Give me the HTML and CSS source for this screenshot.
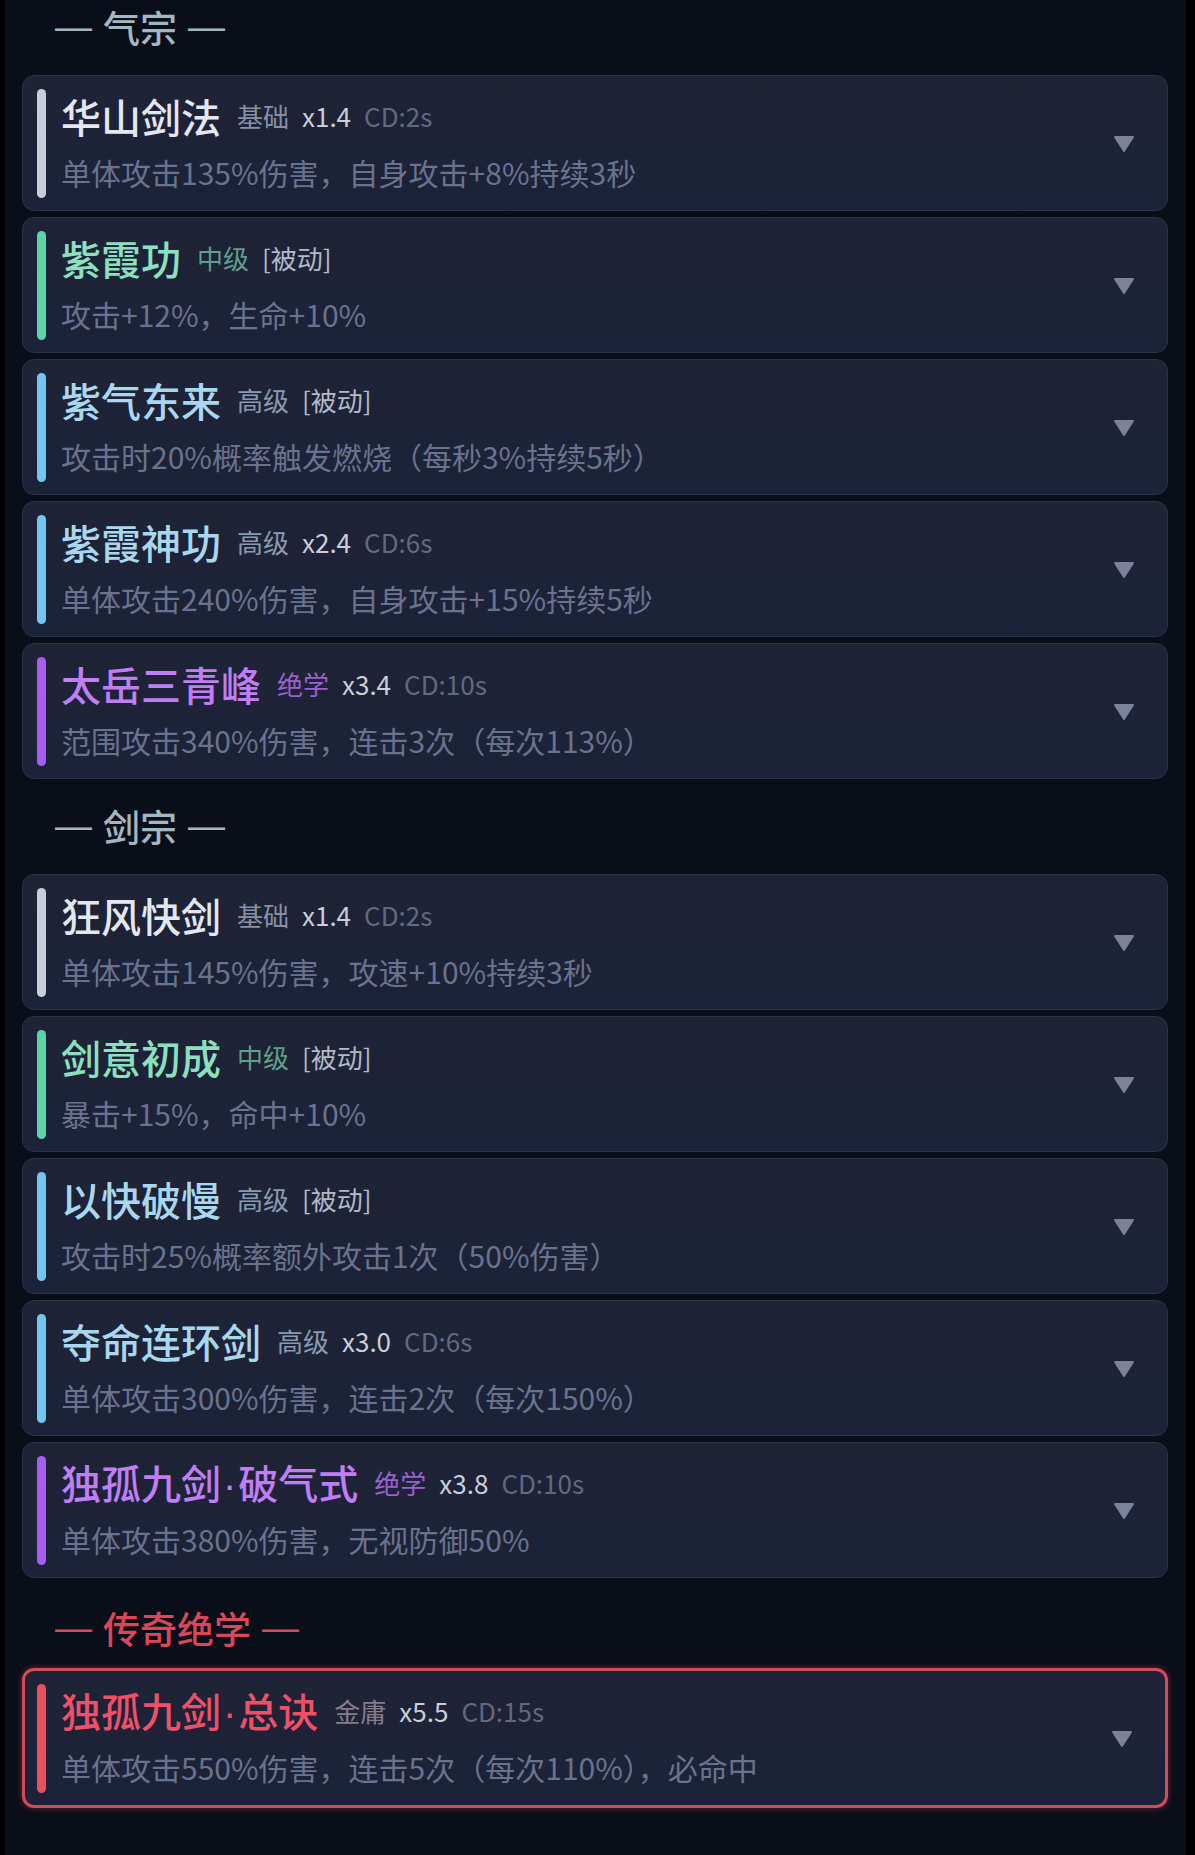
FILE: index.html
```html
<html>
    <head>
    <title>华山武学</title>
    <link rel="stylesheet" href="styles.css">
    </head>

    <body>
        <div class="page">

            <!-- 气宗 -->
            <div class="sect">
                <div class="sect-title"><span class="dash">—</span>气宗<span class="dash">—</span></div>
                <div class="list">
                    <div class="skill lv-basic">
                        <div class="bar"></div>
                        <div class="info">
                            <div class="head">
                                <span class="name">华山剑法</span>
                                <span class="tier">基础</span>
                                <span class="mult">x1.4</span>
                                <span class="cd">CD:2s</span>
                            </div>
                            <div class="desc">单体攻击135%伤害，自身攻击+8%持续3秒</div>
                        </div>
                        <svg class="arrow" width="22" height="18" viewBox="0 0 22 18"><polygon points="2,2 20,2 11,16"/></svg>
                    </div>
                    <div class="skill lv-mid">
                        <div class="bar"></div>
                        <div class="info">
                            <div class="head">
                                <span class="name">紫霞功</span>
                                <span class="tier">中级</span>
                                <span class="passive">[被动]</span>
                            </div>
                            <div class="desc">攻击+12%，生命+10%</div>
                        </div>
                        <svg class="arrow" width="22" height="18" viewBox="0 0 22 18"><polygon points="2,2 20,2 11,16"/></svg>
                    </div>
                    <div class="skill lv-high">
                        <div class="bar"></div>
                        <div class="info">
                            <div class="head">
                                <span class="name">紫气东来</span>
                                <span class="tier">高级</span>
                                <span class="passive">[被动]</span>
                            </div>
                            <div class="desc">攻击时20%概率触发燃烧（每秒3%持续5秒）</div>
                        </div>
                        <svg class="arrow" width="22" height="18" viewBox="0 0 22 18"><polygon points="2,2 20,2 11,16"/></svg>
                    </div>
                    <div class="skill lv-high">
                        <div class="bar"></div>
                        <div class="info">
                            <div class="head">
                                <span class="name">紫霞神功</span>
                                <span class="tier">高级</span>
                                <span class="mult">x2.4</span>
                                <span class="cd">CD:6s</span>
                            </div>
                            <div class="desc">单体攻击240%伤害，自身攻击+15%持续5秒</div>
                        </div>
                        <svg class="arrow" width="22" height="18" viewBox="0 0 22 18"><polygon points="2,2 20,2 11,16"/></svg>
                    </div>
                    <div class="skill lv-top">
                        <div class="bar"></div>
                        <div class="info">
                            <div class="head">
                                <span class="name">太岳三青峰</span>
                                <span class="tier">绝学</span>
                                <span class="mult">x3.4</span>
                                <span class="cd">CD:10s</span>
                            </div>
                            <div class="desc">范围攻击340%伤害，连击3次（每次113%）</div>
                        </div>
                        <svg class="arrow" width="22" height="18" viewBox="0 0 22 18"><polygon points="2,2 20,2 11,16"/></svg>
                    </div>
                </div>
            </div>

            <!-- 剑宗 -->
            <div class="sect">
                <div class="sect-title"><span class="dash">—</span>剑宗<span class="dash">—</span></div>
                <div class="list">
                    <div class="skill lv-basic">
                        <div class="bar"></div>
                        <div class="info">
                            <div class="head">
                                <span class="name">狂风快剑</span>
                                <span class="tier">基础</span>
                                <span class="mult">x1.4</span>
                                <span class="cd">CD:2s</span>
                            </div>
                            <div class="desc">单体攻击145%伤害，攻速+10%持续3秒</div>
                        </div>
                        <svg class="arrow" width="22" height="18" viewBox="0 0 22 18"><polygon points="2,2 20,2 11,16"/></svg>
                    </div>
                    <div class="skill lv-mid">
                        <div class="bar"></div>
                        <div class="info">
                            <div class="head">
                                <span class="name">剑意初成</span>
                                <span class="tier">中级</span>
                                <span class="passive">[被动]</span>
                            </div>
                            <div class="desc">暴击+15%，命中+10%</div>
                        </div>
                        <svg class="arrow" width="22" height="18" viewBox="0 0 22 18"><polygon points="2,2 20,2 11,16"/></svg>
                    </div>
                    <div class="skill lv-high">
                        <div class="bar"></div>
                        <div class="info">
                            <div class="head">
                                <span class="name">以快破慢</span>
                                <span class="tier">高级</span>
                                <span class="passive">[被动]</span>
                            </div>
                            <div class="desc">攻击时25%概率额外攻击1次（50%伤害）</div>
                        </div>
                        <svg class="arrow" width="22" height="18" viewBox="0 0 22 18"><polygon points="2,2 20,2 11,16"/></svg>
                    </div>
                    <div class="skill lv-high">
                        <div class="bar"></div>
                        <div class="info">
                            <div class="head">
                                <span class="name">夺命连环剑</span>
                                <span class="tier">高级</span>
                                <span class="mult">x3.0</span>
                                <span class="cd">CD:6s</span>
                            </div>
                            <div class="desc">单体攻击300%伤害，连击2次（每次150%）</div>
                        </div>
                        <svg class="arrow" width="22" height="18" viewBox="0 0 22 18"><polygon points="2,2 20,2 11,16"/></svg>
                    </div>
                    <div class="skill lv-top">
                        <div class="bar"></div>
                        <div class="info">
                            <div class="head">
                                <span class="name">独孤九剑<span class="dot">·</span>破气式</span>
                                <span class="tier">绝学</span>
                                <span class="mult">x3.8</span>
                                <span class="cd">CD:10s</span>
                            </div>
                            <div class="desc">单体攻击380%伤害，无视防御50%</div>
                        </div>
                        <svg class="arrow" width="22" height="18" viewBox="0 0 22 18"><polygon points="2,2 20,2 11,16"/></svg>
                    </div>
                </div>
            </div>

            <!-- 传奇绝学 -->
            <div class="sect legend">
                <div class="sect-title"><span class="dash">—</span>传奇绝学<span class="dash">—</span></div>
                <div class="list">
                    <div class="skill lv-legend">
                        <div class="bar"></div>
                        <div class="info">
                            <div class="head">
                                <span class="name">独孤九剑<span class="dot">·</span>总诀</span>
                                <span class="tier">金庸</span>
                                <span class="mult">x5.5</span>
                                <span class="cd">CD:15s</span>
                            </div>
                            <div class="desc">单体攻击550%伤害，连击5次（每次110%），必命中</div>
                        </div>
                        <svg class="arrow" width="22" height="18" viewBox="0 0 22 18"><polygon points="2,2 20,2 11,16"/></svg>
                    </div>
                </div>
            </div>

        </div>
    </body>
</html>
```

FILE: styles.css
```css
*{
    padding:0;
    margin:0;
    box-sizing:border-box;
}

body{
    background-color:#000;
    font-family:"Noto Sans CJK SC","Noto Sans",sans-serif;
}

/*整个页面区域，左右有黑边*/
.page{
    margin:0 9px 0 5px;
    min-height:1855px;
    padding:5px 18px 40px 17px;
    background-color:#0a0e18;
}

/*分组标题*/
.sect + .sect{
    margin-top:25px;
}

.sect.legend{
    margin-top:28px;
}

.sect-title{
    height:50px;
    line-height:44px;
    padding-left:33px;
    margin-bottom:20px;
    font-size:37px;
    font-weight:500;
    color:#a3b7c1;
}

/*标题两侧的横线*/
.sect-title .dash{
    font-family:"Liberation Sans",sans-serif;
    font-weight:400;
    vertical-align:0.12em;
    margin:0 11px;
}

.sect-title .dash:first-child{
    margin-left:0;
}

.legend .sect-title{
    margin-bottom:12px;
    color:#d9475a;
}

.list{
    display:flex;
    flex-direction:column;
    gap:6px;
}

/*技能卡片*/
.skill{
    display:flex;
    align-items:center;
    gap:15px;
    height:136px;
    padding:13px 32px 12px 14px;
    border:1px solid #2c3247;
    border-radius:12px;
    background:linear-gradient(#1f2336,#1b2239);
}

.skill .bar{
    align-self:stretch;
    width:9px;
    border-radius:5px;
}

.skill .info{
    flex:1;
    align-self:stretch;
    margin-top:2px;
}

.skill .head{
    display:flex;
    align-items:center;
    height:50px;
    line-height:50px;
}

.skill .name{
    font-size:40px;
    font-weight:500;
    margin-right:16px;
}

.skill .name .dot{
    font-family:"Liberation Sans",sans-serif;
    margin:0 2px;
}

.skill .tier,
.skill .passive,
.skill .mult,
.skill .cd{
    font-size:26px;
    margin-right:13px;
}

.skill .tier{
    color:#8a90a3;
}

.skill .passive{
    color:#b3b9c7;
}

.skill .mult{
    color:#c9ced9;
}

.skill .cd{
    color:#626981;
}

.skill .desc{
    margin-top:11px;
    height:40px;
    line-height:40px;
    font-size:30px;
    color:#6b728d;
    white-space:nowrap;
}

.skill .arrow{
    flex:none;
    fill:#7c8299;
    stroke:#7c8299;
    stroke-width:2;
    stroke-linejoin:round;
}

/*不同品级的颜色*/
.lv-basic .bar{ background-color:#c9cdd9; }
.lv-basic .name{ color:#e3e7ef; }

.lv-mid .bar{ background-color:#5fd3a8; }
.lv-mid .name{ color:#8de0bf; }
.lv-mid .tier{ color:#5f9f8c; }

.lv-high .bar{ background-color:#74c6f2; }
.lv-high .name{ color:#a9d7ee; }
.lv-high .tier{ color:#8a9ab0; }

.lv-top .bar{ background-color:#a95cf0; }
.lv-top .name{ color:#c07ef5; }
.lv-top .tier{ color:#9a62cf; }

/*传奇绝学，红色描边*/
.lv-legend{
    height:140px;
    padding-left:12px;
    border:3px solid #d44a5a;
    box-shadow:0 0 6px rgba(220,70,90,0.45);
}
.lv-legend .bar{ background-color:#e8505e; }
.lv-legend .name{ color:#ee5068; }
.lv-legend .tier{ color:#857d8c; }
```
